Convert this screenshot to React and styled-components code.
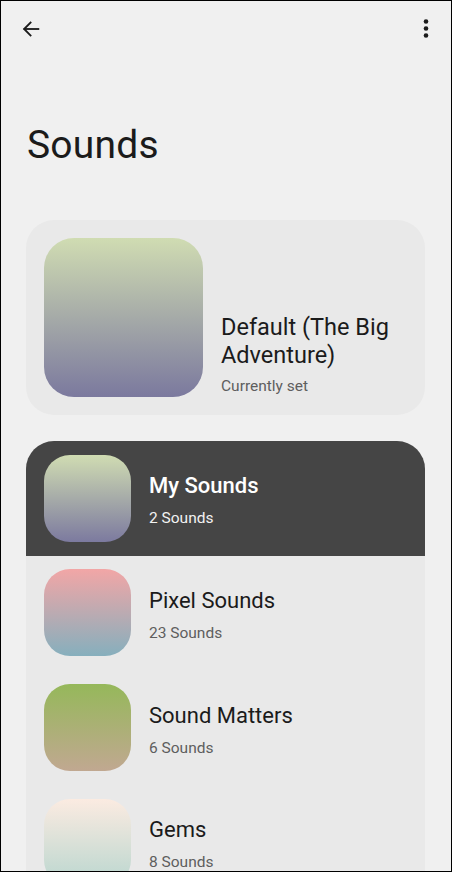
import React from 'react'
import styled, { createGlobalStyle } from 'styled-components'

// #region --- css -----
const GlobalStyle = createGlobalStyle`
  html, body {
    margin: 0;
    padding: 0;
    background: #f0f0f0;
  }
  * { box-sizing: border-box; }
`

const Screen = styled.div`
  width: 452px;
  height: 872px;
  border: 1px solid #000;
  background: #f0f0f0;
  overflow: hidden;
  font-family: Roboto, "Noto Sans", sans-serif;
  color: #1b1b1b;
`

const TopBar = styled.div`
  height: 55px;
  display: flex;
  align-items: center;
  justify-content: space-between;
  padding: 0 11px 0 16px;

  svg { display: block; }
`

const IconButton = styled.button`
  width: 28px;
  height: 28px;
  border: 0;
  padding: 0;
  background: transparent;
  display: flex;
  align-items: center;
  justify-content: center;
  color: #1b1b1b;
`

const Title = styled.h1`
  margin: 66px 0 0 26px;
  font-size: 39px;
  font-weight: 400;
  line-height: 46px;
  letter-spacing: 0.2px;
`

const CurrentCard = styled.div`
  margin: 52px 26px 0 25px;
  height: 195px;
  border-radius: 28px;
  background: #e9e9e9;
  padding: 18px;
  display: flex;
  gap: 18px;
`

const Art = styled.div`
  flex: none;
  width: ${p => p.$size}px;
  height: ${p => p.$size}px;
  border-radius: ${p => p.$radius}px;
  background: linear-gradient(180deg, ${p => p.$from}, ${p => p.$to});
`

const CurrentText = styled.div`
  align-self: flex-end;
  padding-bottom: 1px;
`

const CurrentName = styled.div`
  font-size: 23.5px;
  line-height: 28px;
  margin-bottom: 7px;
`

const Sub = styled.div`
  font-size: 15.5px;
  line-height: 20px;
  color: ${p => (p.$dark ? '#f2f2f2' : '#5e5e5e')};
`

const List = styled.div`
  margin: 26px 26px 0 25px;
  border-radius: 28px 28px 0 0;
  background: #e9e9e9;
  overflow: hidden;
`

const Row = styled.div`
  height: 114.67px;
  padding: 0 18px;
  display: flex;
  align-items: center;
  gap: 18px;
  background: ${p => (p.$selected ? '#454545' : 'transparent')};
  color: ${p => (p.$selected ? '#ffffff' : '#1b1b1b')};
`

const RowText = styled.div`
  display: flex;
  flex-direction: column;
  gap: 10px;
  margin-top: 6px;
`

const RowName = styled.div`
  font-size: 22px;
  line-height: 24px;
  font-weight: ${p => (p.$selected ? 500 : 400)};
`
// #endregion --- css ----

const packs = [
  { name: 'My Sounds', count: '2 Sounds', from: '#d0dcb2', to: '#7c7a9f', selected: true },
  { name: 'Pixel Sounds', count: '23 Sounds', from: '#f2a6a6', to: '#86afbd' },
  { name: 'Sound Matters', count: '6 Sounds', from: '#95b85a', to: '#c1a891' },
  { name: 'Gems', count: '8 Sounds', from: '#fbebe1', to: '#b9d6cf' },
]

const App = () => {
  return (
    <Screen>
      <GlobalStyle />

      <TopBar>
        <IconButton aria-label="Back">
          <svg width="22" height="22" viewBox="0 0 24 24" fill="none" stroke="#1b1b1b" strokeWidth="2" strokeLinecap="square">
            <path d="M20 12H5" />
            <path d="M11.5 5L4.5 12l7 7" />
          </svg>
        </IconButton>
        <IconButton aria-label="More">
          <svg width="24" height="24" viewBox="0 0 24 24" fill="#1b1b1b">
            <circle cx="12" cy="4.5" r="2.3" />
            <circle cx="12" cy="11.5" r="2.3" />
            <circle cx="12" cy="18.5" r="2.3" />
          </svg>
        </IconButton>
      </TopBar>

      <Title>Sounds</Title>

      {/* currently set pack */}
      <CurrentCard>
        <Art $size={159} $radius={30} $from="#d0dcb2" $to="#7b799e" />
        <CurrentText>
          <CurrentName>Default (The Big<br />Adventure)</CurrentName>
          <Sub>Currently set</Sub>
        </CurrentText>
      </CurrentCard>

      {/* sound packs */}
      <List>
        {packs.map(p => (
          <Row key={p.name} $selected={p.selected}>
            <Art $size={87} $radius={26} $from={p.from} $to={p.to} />
            <RowText>
              <RowName $selected={p.selected}>{p.name}</RowName>
              <Sub $dark={p.selected}>{p.count}</Sub>
            </RowText>
          </Row>
        ))}
      </List>
    </Screen>
  )
}

export default App
